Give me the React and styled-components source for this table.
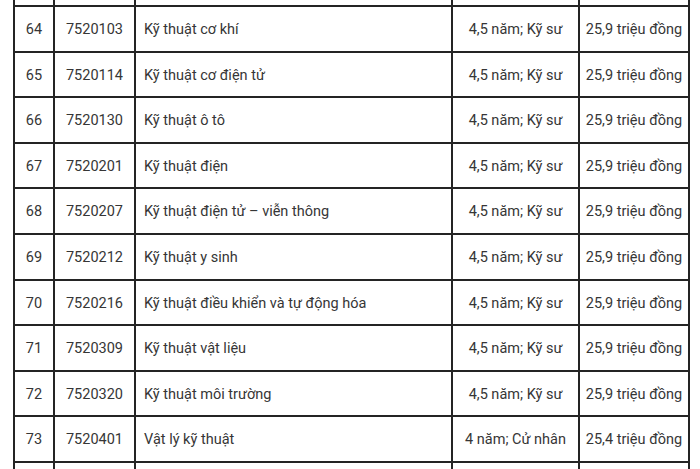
import React from "react"
import styled, { createGlobalStyle } from "styled-components"

const GlobalStyle = createGlobalStyle`
  html, body {
    margin: 0;
    padding: 0;
    background: #fff;
  }
  body {
    font-family: Roboto, "Noto Sans", "Liberation Sans", sans-serif;
    color: #333;
    overflow: hidden;
  }
`;

const Page = styled.div`
  width: 700px;
  height: 469px;
  overflow: hidden;
  padding-left: 13px;
  box-sizing: border-box;
`;

const Table = styled.table`
  border-collapse: collapse;
  table-layout: fixed;
  width: 675px;
  font-size: 14.5px;
  line-height: 1.2;
`;

const Row = styled.tr`
  height: ${(p) => p.$h}px;
`;

const Cell = styled.td`
  border: 2px solid #242424;
  border-top: ${(p) => (p.$open ? "none" : "2px solid #242424")};
  padding: 2px ${(p) => (p.$align === "left" ? "8px" : "4px")} 0;
  text-align: ${(p) => p.$align || "center"};
  vertical-align: middle;
  white-space: nowrap;
  color: #363636;
`;

const cols = [40, 81, 317, 127, 110];

const nganh = [
  ["64", "7520103", "Kỹ thuật cơ khí", "4,5 năm; Kỹ sư", "25,9 triệu đồng"],
  ["65", "7520114", "Kỹ thuật cơ điện tử", "4,5 năm; Kỹ sư", "25,9 triệu đồng"],
  ["66", "7520130", "Kỹ thuật ô tô", "4,5 năm; Kỹ sư", "25,9 triệu đồng"],
  ["67", "7520201", "Kỹ thuật điện", "4,5 năm; Kỹ sư", "25,9 triệu đồng"],
  ["68", "7520207", "Kỹ thuật điện tử – viễn thông", "4,5 năm; Kỹ sư", "25,9 triệu đồng"],
  ["69", "7520212", "Kỹ thuật y sinh", "4,5 năm; Kỹ sư", "25,9 triệu đồng"],
  ["70", "7520216", "Kỹ thuật điều khiển và tự động hóa", "4,5 năm; Kỹ sư", "25,9 triệu đồng"],
  ["71", "7520309", "Kỹ thuật vật liệu", "4,5 năm; Kỹ sư", "25,9 triệu đồng"],
  ["72", "7520320", "Kỹ thuật môi trường", "4,5 năm; Kỹ sư", "25,9 triệu đồng"],
  ["73", "7520401", "Vật lý kỹ thuật", "4 năm; Cử nhân", "25,4 triệu đồng"],
];

const App = () => (
  <Page>
    <GlobalStyle />
    <Table>
      <colgroup>
        {cols.map((w, i) => <col key={i} style={{ width: w }} />)}
      </colgroup>
      <tbody>
        <Row $h={6}>
          {cols.map((_, i) => <Cell key={i} $open />)}
        </Row>
        {nganh.map((r) => (
          <Row key={r[0]} $h={45.6}>
            <Cell>{r[0]}</Cell>
            <Cell>{r[1]}</Cell>
            <Cell $align="left">{r[2]}</Cell>
            <Cell>{r[3]}</Cell>
            <Cell>{r[4]}</Cell>
          </Row>
        ))}
        <Row $h={45.6}>
          {cols.map((_, i) => <Cell key={i} />)}
        </Row>
      </tbody>
    </Table>
  </Page>
)

export default App
